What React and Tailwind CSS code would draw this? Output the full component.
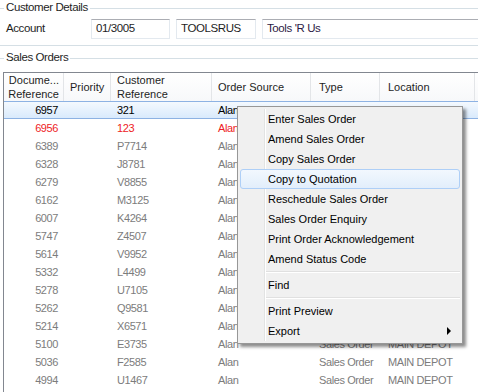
import React from "react";

const rows = [
  ["6957", "321", "Alan", "Sales Order", "MAIN DEPOT", "sel"],
  ["6956", "123", "Alan", "Sales Order", "MAIN DEPOT", "red"],
  ["6389", "P7714", "Alan", "Sales Order", "MAIN DEPOT"],
  ["6328", "J8781", "Alan", "Sales Order", "MAIN DEPOT"],
  ["6279", "V8855", "Alan", "Sales Order", "MAIN DEPOT"],
  ["6162", "M3125", "Alan", "Sales Order", "MAIN DEPOT"],
  ["6007", "K4264", "Alan", "Sales Order", "MAIN DEPOT"],
  ["5747", "Z4507", "Alan", "Sales Order", "MAIN DEPOT"],
  ["5614", "V9952", "Alan", "Sales Order", "MAIN DEPOT"],
  ["5332", "L4499", "Alan", "Sales Order", "MAIN DEPOT"],
  ["5278", "U7105", "Alan", "Sales Order", "MAIN DEPOT"],
  ["5262", "Q9581", "Alan", "Sales Order", "MAIN DEPOT"],
  ["5214", "X6571", "Alan", "Sales Order", "MAIN DEPOT"],
  ["5100", "E3735", "Alan", "Sales Order", "MAIN DEPOT"],
  ["5036", "F2585", "Alan", "Sales Order", "MAIN DEPOT"],
  ["4994", "U1467", "Alan", "Sales Order", "MAIN DEPOT"],
];

const cols = "grid grid-cols-[60px_47px_101px_99px_69px_95px_1fr] grid-rows-[100%]";

const menu = [
  "Enter Sales Order",
  "Amend Sales Order",
  "Copy Sales Order",
  "Copy to Quotation",
  "Reschedule Sales Order",
  "Sales Order Enquiry",
  "Print Order Acknowledgement",
  "Amend Status Code",
  "-",
  "Find",
  "-",
  "Print Preview",
  "Export",
];

const GroupTitle = ({ children }) => (
  <div className="flex items-center h-[16px]">
    <div className="w-[4px] h-px bg-[#d5dfe5]" />
    <span className="px-[2px] text-[#1e1e1e]">{children}</span>
    <div className="flex-1 h-px bg-[#d5dfe5]" />
  </div>
);

const Input = ({ className, children }) => (
  <div
    className={
      "h-[20px] border border-[#e3e9ef] border-t-[#abadb3] bg-white flex items-center px-[4px] " +
      className
    }
  >
    {children}
  </div>
);

const ContextMenu = () => (
  <div className="absolute left-[237px] top-[106px] w-[226px] bg-[#f0f0f0] border border-[#979797] py-[2px] shadow-[3px_3px_3px_rgba(0,0,0,0.45)] font-['Liberation_Sans',Arial,sans-serif] text-[11px] tracking-normal text-black">
    {/* icon gutter line */}
    <div className="absolute left-[26px] top-[2px] bottom-[2px] w-px bg-[#e2e3e3]" />
    <div className="absolute left-[27px] top-[2px] bottom-[2px] w-px bg-white" />
    {menu.map((item, i) =>
      item === "-" ? (
        <div key={i} className="h-[6px] flex flex-col justify-center pl-[28px] pr-[2px]">
          <div className="h-px bg-[#e0e0e0]" />
          <div className="h-px bg-white" />
        </div>
      ) : (
        <div
          key={i}
          className={
            "relative h-[20px] mx-[2px] flex items-center pl-[27px] rounded-[3px] border " +
            (item === "Copy to Quotation"
              ? "border-[#aecff7] bg-linear-to-b from-[#f2f8fe] to-[#e2eefb]"
              : "border-transparent")
          }
        >
          <span className="leading-none whitespace-nowrap">{item}</span>
          {item === "Export" && (
            <span className="absolute right-[8px] top-[5px] w-0 h-0 border-y-[4px] border-y-transparent border-l-[4px] border-l-black" />
          )}
        </div>
      )
    )}
  </div>
);

export default function App() {
  return (
    <div className="relative w-[478px] h-[392px] overflow-hidden bg-white font-['Liberation_Sans',Arial,sans-serif] text-[11.5px] tracking-[-0.4px]">
      <GroupTitle>Customer Details</GroupTitle>
      <div className="flex items-center mt-[3px] pl-[6px] text-[#1e1e1e]">
        <span className="w-[85px]">Account</span>
        <Input className="w-[79px]">01/3005</Input>
        <Input className="w-[80px] ml-[6px]">TOOLSRUS</Input>
        <Input className="flex-1 ml-[6px] -mr-[4px] text-[#2b1a45]">Tools 'R Us</Input>
      </div>
      <div className="h-px bg-[#d5dfe5] mt-[6px]" />
      <div className="mt-[4px]">
        <GroupTitle>Sales Orders</GroupTitle>
      </div>

      <div className="mt-[6px] ml-[3px] border-l border-t border-[#828790] h-[400px]">
        <div
          className={
            cols +
            " h-[28px] bg-linear-to-b from-white to-[#f7f8fa] text-[#1e1e1e] leading-[14px] text-[11px] tracking-normal"
          }
        >
          <div className="border-r border-[#e3e5e8] flex flex-col items-end justify-center pr-[4px]">
            <span>Docume...</span>
            <span>Reference</span>
          </div>
          <div className="border-r border-[#e3e5e8] flex items-center pl-[6px]">Priority</div>
          <div className="border-r border-[#e3e5e8] flex flex-col justify-center pl-[6px]">
            <span>Customer</span>
            <span>Reference</span>
          </div>
          <div className="border-r border-[#e3e5e8] flex items-center pl-[6px]">Order Source</div>
          <div className="border-r border-[#e3e5e8] flex items-center pl-[8px]">Type</div>
          <div className="border-r border-[#e3e5e8] flex items-center pl-[8px]">Location</div>
          <div />
        </div>
        {rows.map((r) => {
          const kind = r[5];
          const color =
            kind === "sel" ? "text-black" : kind === "red" ? "text-[#ee1c25]" : "text-[#7c7c7c]";
          const bg =
            kind === "sel"
              ? "bg-linear-to-b from-[#f4f9fe] to-[#d9eafc] border-y border-[#8db2e3]"
              : "border-y border-transparent";
          return (
            <div
              key={r[0]}
              className={cols + " h-[18px] items-center whitespace-nowrap text-[11px] " + color + " " + bg}
            >
              <div className="text-right pr-[6px]">{r[0]}</div>
              <div />
              <div className="pl-[6px]">{r[1]}</div>
              <div className="pl-[6px]">{r[2]}</div>
              <div className="pl-[8px]">{r[3]}</div>
              <div className="pl-[8px]">{r[4]}</div>
              <div />
            </div>
          );
        })}
      </div>

      <ContextMenu />
    </div>
  );
}
